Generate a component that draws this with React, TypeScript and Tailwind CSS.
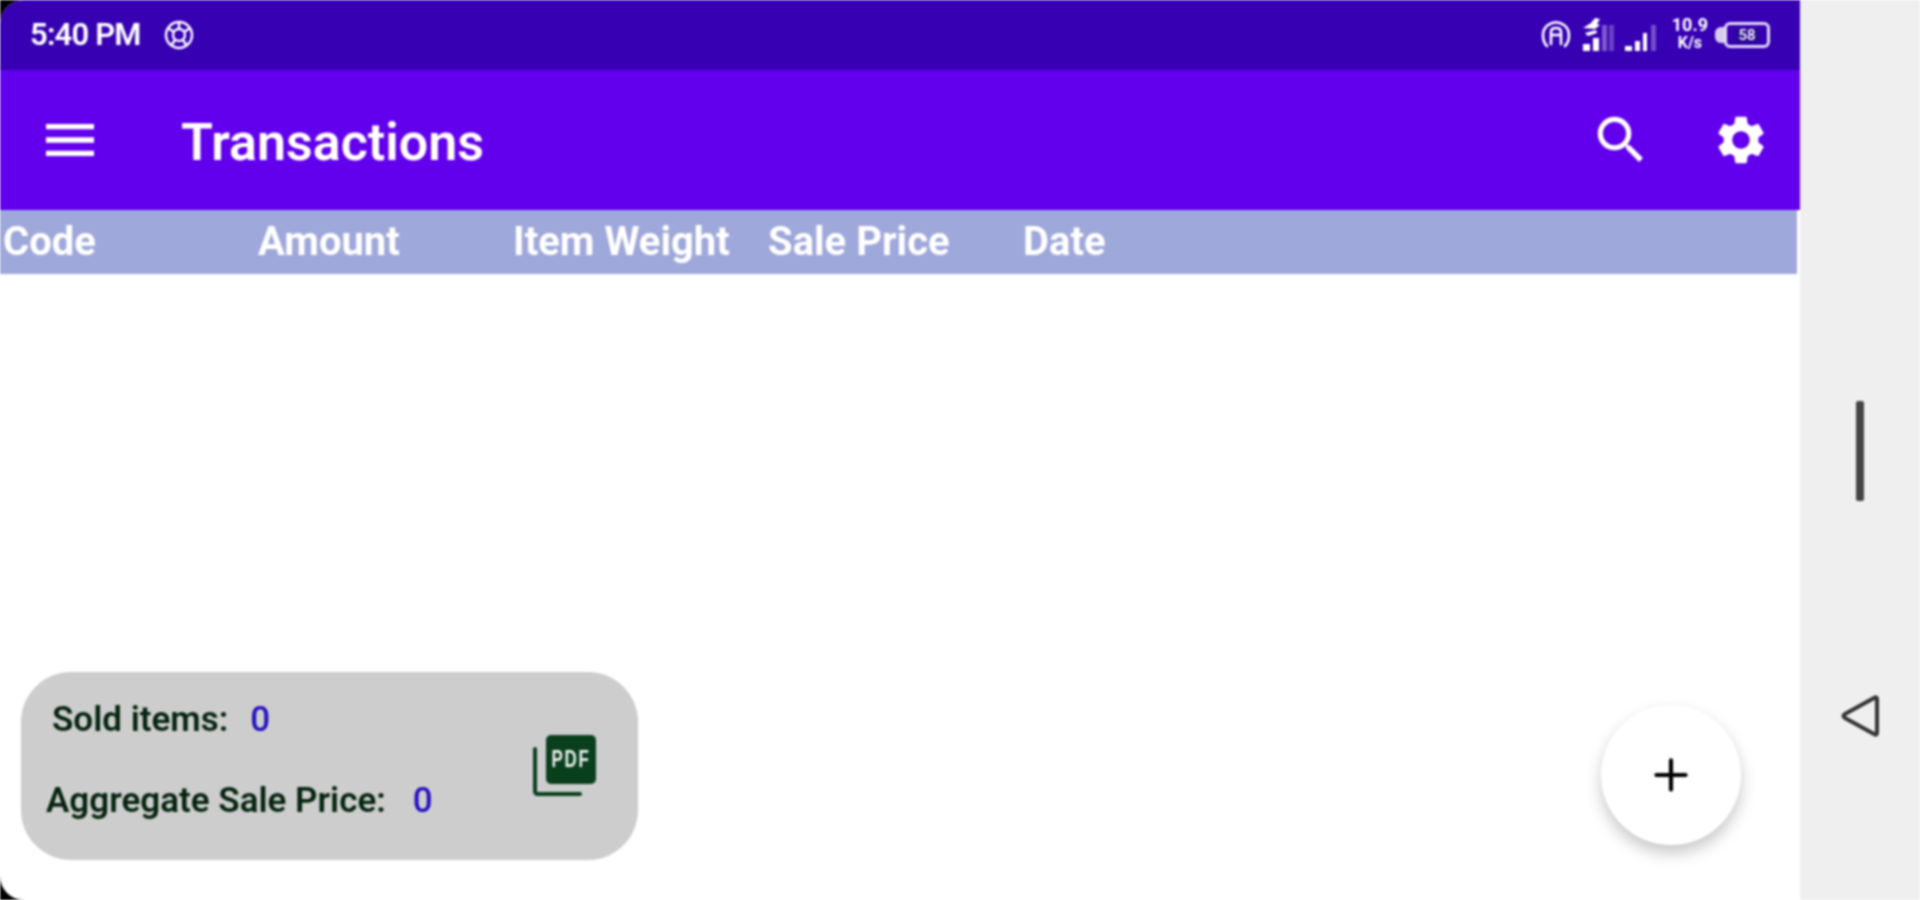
import { Plus } from 'lucide-react'
import { MdMenu, MdSearch, MdSettings } from 'react-icons/md'

const columns = ['Code', 'Amount', 'Item Weight', 'Sale Price', 'Date']

function StatusIcons() {
  return (
    <div className="flex items-center gap-[7px] text-white">
      {/* hotspot */}
      <svg width="32" height="32" viewBox="0 0 32 32" fill="none" stroke="currentColor" strokeWidth="2.6" strokeLinecap="round" className="mr-[2px]">
        <path d="M7 27C2 22 1 11 8 6c5-3.500 11-3.500 16 0 7 5 6 16 1 21" />
        <path d="M11 25V13c0-3 2-4 5-4s5 1 5 4v12M11 16h10" />
      </svg>
      {/* wifi + signal 1 */}
      <svg width="34" height="38" viewBox="0 0 34 38" fill="currentColor">
        <path d="M2 12l8-5 4-5 5 1-3 5 3 1-5 4zM4 17l11-3 1 3-9 3z" />
        <rect x="2" y="28" width="7" height="7" />
        <rect x="12" y="22" width="6" height="13" />
        <rect x="21" y="9" width="5" height="26" opacity="0.35" />
        <rect x="28" y="9" width="5" height="26" opacity="0.25" />
      </svg>
      {/* signal 2 */}
      <svg width="32" height="30" viewBox="0 0 32 30" fill="currentColor" className="ml-[3px] mt-[6px]">
        <rect x="0" y="23" width="7" height="5" />
        <rect x="10" y="18" width="5" height="10" />
        <rect x="18" y="10" width="4" height="18" />
        <rect x="26" y="2" width="5" height="26" opacity="0.3" />
      </svg>
      <div className="flex flex-col items-center ml-[8px] leading-[18px] text-[18px] font-bold -mt-[2px]">
        <span>10.9</span>
        <span className="text-[16px]">K/s</span>
      </div>
      {/* battery */}
      <div className="flex items-center">
        <div className="w-[9px] h-[16px] bg-white/80 rounded-l-[6px]" />
        <div className="w-[46px] h-[26px] rounded-[6px] border-[3px] border-white/85 flex items-center justify-center text-[15px] leading-none font-medium">
          <span className="bg-[#2a0a90] px-[3px]">58</span>
        </div>
      </div>
    </div>
  )
}

function PdfIcon() {
  return (
    <svg width="66" height="62" viewBox="0 0 66 62">
      <path d="M3 14v42c0 2 1 3 3 3h42" fill="none" stroke="#0a3f1e" strokeWidth="4" strokeLinecap="round" />
      <rect x="14" y="0" width="50" height="49" rx="5" fill="#0a3f1e" />
      <text transform="translate(39 32) scale(0.85 1.2)" textAnchor="middle" fontFamily="'Liberation Sans', sans-serif" fontWeight="700" fontSize="20" letterSpacing="2" fill="#eef1ee">PDF</text>
    </svg>
  )
}

export default function App() {
  return (
    <div className="w-[1920px] h-[900px] flex bg-[#efefef] font-['Roboto',sans-serif] overflow-hidden blur-[0.8px]">
      <div className="w-[1800px] h-full bg-black">
        <div className="h-full rounded-l-[24px] overflow-hidden flex flex-col bg-white">
          {/* status bar */}
          <div className="h-[70px] bg-[#3700b3] flex items-center justify-between pl-[30px] pr-[30px] text-white">
            <div className="flex items-center gap-[22px]">
              <span className="text-[31px] font-semibold tracking-[-0.8px]">5:40 PM</span>
              <svg width="32" height="32" viewBox="0 0 32 32" fill="none" stroke="currentColor" strokeWidth="2.4">
                <circle cx="16" cy="16" r="13" />
                <circle cx="16" cy="16" r="6" />
                <path d="M16 3v7M5 9l6 4M27 9l-6 4M8 27l4-6M24 27l-4-6" />
              </svg>
            </div>
            <StatusIcons />
          </div>

          {/* toolbar */}
          <div className="h-[140px] bg-[#6200ee] flex items-center text-white">
            <MdMenu className="ml-[38px] w-[64px] h-[64px]" />
            <span className="ml-[79px] mt-[6px] text-[52px] font-semibold leading-none">Transactions</span>
            <MdSearch className="ml-auto w-[62px] h-[62px]" />
            <MdSettings className="ml-[60px] mr-[30px] w-[58px] h-[58px]" />
          </div>

          {/* table header */}
          <div className="h-[64px] w-[1797px] bg-[#9fa8da] flex items-center pl-[3px] text-white text-[40px] font-bold">
            {columns.map(c => (
              <div key={c} className="w-[255px] leading-none whitespace-nowrap">{c}</div>
            ))}
          </div>

          {/* list is empty, footer sits at the bottom */}
          <div className="flex-1 flex items-end justify-between pl-[21px] pr-[59px] pb-[40px]">
            <div className="w-[617px] h-[188px] bg-[#cdcdcd] rounded-[50px] flex items-center justify-between pr-[40px] text-[#05240f] text-[35px] font-semibold">
              <div className="flex flex-col gap-[46px] pl-[25px] -mt-[12px] leading-none">
                <div className="flex pl-[6px]">
                  <span>Sold items:</span>
                  <span className="ml-[22px] text-[#2410c0] font-medium">0</span>
                </div>
                <div className="flex">
                  <span>Aggregate Sale Price:</span>
                  <span className="ml-[27px] text-[#2410c0] font-medium">0</span>
                </div>
              </div>
              <PdfIcon />
            </div>
            <div className="w-[140px] h-[140px] mb-[15px] rounded-full bg-white shadow-[0_8px_16px_rgba(0,0,0,0.22)] flex items-center justify-center">
              <Plus className="w-[50px] h-[50px] text-black" strokeWidth={2} />
            </div>
          </div>
        </div>
      </div>

      {/* navigation bar */}
      <div className="flex-1 flex flex-col items-center">
        <div className="mt-[401px] w-[8px] h-[100px] rounded-[2px] bg-[#444444]" />
        <svg width="44" height="48" viewBox="0 0 44 48" className="mt-[191px] ml-[1px]" fill="none" stroke="#333333" strokeWidth="4" strokeLinejoin="round">
          <path d="M38 7v34c0 2-1 2-3 1L6 26c-2-1-2-3 0-4L35 6c2-1 3-1 3 1z" />
        </svg>
      </div>
    </div>
  )
}
